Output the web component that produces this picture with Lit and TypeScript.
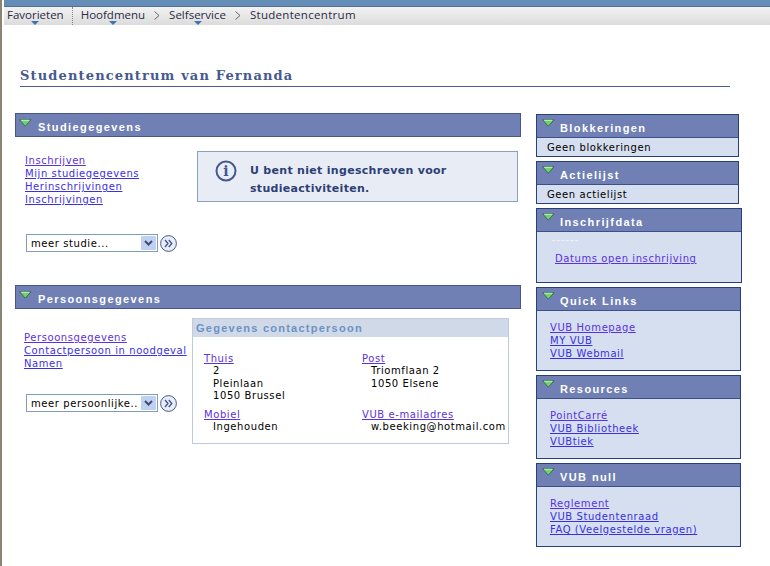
import { LitElement, html, css, svg } from "lit";
import { customElement } from "lit/decorators.js";

const tri = svg`<svg class="tri" width="13" height="8" viewBox="0 0 13 8"><path d="M0.6 0.8H12L6.3 7.2Z" fill="#6fd16f" stroke="#2f5f3a" stroke-width="0.8"/><path d="M2.2 1.3H10.4" stroke="#c6f5c0" stroke-width="1"/></svg>`;
const go = html`<svg class="go" width="17" height="17" viewBox="0 0 17 17"><circle cx="8.5" cy="8.5" r="7.9" fill="#e8edf7" stroke="#4a5a86" stroke-width="1"/><path d="M5 5L8 8.5L5 12M8.8 5L11.8 8.5L8.8 12" fill="none" stroke="#3c5290" stroke-width="1.3"/></svg>`;
const caret = html`<span class="caret"></span>`;
const chev = html`<svg class="chev" width="6" height="9" viewBox="0 0 6 9"><path d="M0.5 0.5L5 4.5L0.5 8.5" fill="none" stroke="#666" stroke-width="1"/></svg>`;

const select = (label: string) => html`<div class="selrow">
  <div class="select"><span class="sellabel">${label}</span><span class="selbtn"><svg width="11" height="8" viewBox="0 0 11 8"><path d="M2 2L5.5 5.5L9 2" fill="none" stroke="#3d4f70" stroke-width="2"/></svg></span></div>
  ${go}
</div>`;

const links = (items: string[]) => html`<div class="links">${items.map((t) => html`<a href="#">${t}</a>`)}</div>`;

@customElement("app-root")
export class AppRoot extends LitElement {
  static styles = css`
    :host { display: block; width: 770px; height: 566px; box-sizing: border-box; border-left: 2px solid #8a8474; overflow: hidden; background: #fff; font-family: "DejaVu Sans", Verdana, sans-serif; font-size: 10px; letter-spacing: 0.58px; color: #000; }
    a { color: #3a30e0; text-decoration: underline; }
    a.v { color: #5a30e0; }
    .topbar { height: 6px; margin-left: 2px; background: #648db8; border-bottom: 1px solid #54708f; }
    .menu { height: 18px; margin-left: 2px; background: linear-gradient(#f2f2f2, #dcdcdc); display: flex; align-items: flex-start; padding-left: 3px; font: 11.5px/16px "Open Sans", "Noto Sans", sans-serif; letter-spacing: 0; color: #2a2a44; }
    .mi { position: relative; display: block; height: 18px; }
    .caret { position: absolute; left: 50%; bottom: 0; margin-left: -4px; border: 4px solid transparent; border-top: 4px solid #3f74b4; border-bottom: 0; }
    .sep { margin: 0 8px 0 8px; height: 18px; border-left: 1px dotted #888; }
    .chev { margin: 4px 9px 0; flex: none; }
    .wide { letter-spacing: 0.3px; }
    .main { padding-left: 13px; }
    .left { width: 506px; }
    .title { margin: 41px 0 0 5px; width: 710px; height: 20px; border-bottom: 1px solid #4a5a98; font: bold 13px/19px "DejaVu Serif", Georgia, serif; letter-spacing: 1.15px; color: #45598f; }
    .cols { display: flex; align-items: flex-start; margin-top: 26px; }
    .right { margin-left: 15px; display: flex; flex-direction: column; gap: 4px; padding-top: 1px; }
    .sechead { box-sizing: border-box; height: 24px; background: #7080b4; border: 1px solid #47568c; color: #fff; font: bold 11px "Liberation Sans", Arial, sans-serif; letter-spacing: 1.4px; display: flex; align-items: center; padding-top: 3px; }
    .tri { flex: none; margin: -8px 0 0 3px; }
    .sechead span { margin-left: 6px; }
    .links { display: flex; flex-direction: column; align-items: flex-start; line-height: 13px; }
    .links a:first-child { color: #5a30e0; }
    .s1 { display: flex; height: 148px; }
    .s1col { width: 182px; padding: 17px 0 0 10px; box-sizing: border-box; }
    .selrow { display: flex; align-items: center; gap: 2px; margin-top: 28px; margin-left: 1px; }
    .select { box-sizing: border-box; width: 132px; height: 18px; background: #fff; border: 1px solid #7f9db9; display: flex; align-items: center; justify-content: space-between; font-size: 10px; }
    .sellabel { padding-left: 4px; white-space: nowrap; overflow: hidden; }
    .selbtn { width: 15px; height: 14px; margin-right: 1px; background: #bfd0f2; display: flex; align-items: center; justify-content: center; flex: none; border-radius: 1px; }
    .go { flex: none; }
    .info { box-sizing: border-box; width: 321px; height: 51px; margin: 14px 0 0 0; background: #e8edf5; border: 1px solid #8a9fc5; display: flex; color: #2d3f75; font-weight: bold; font-size: 11px; letter-spacing: 0.3px; line-height: 18px; }
    .info svg { flex: none; margin: 8px 0 0 17px; }
    .info div { margin: 10px 0 0 11px; }
    .s2 { display: flex; }
    .s2col { width: 177px; padding: 22px 0 0 9px; box-sizing: border-box; }
    .s2col .selrow { margin-top: 24px; margin-left: 2px; }
    .contact { box-sizing: border-box; width: 317px; height: 126px; margin-top: 9px; border: 1px solid #c0cadf; }
    .chead { height: 18px; background: #d0d9e8; color: #6c92c4; font: bold 11px/18px "Liberation Sans", Arial, sans-serif; letter-spacing: 1.25px; padding-left: 3px; }
    .grid { display: grid; grid-template-columns: 158px 1fr; padding: 16px 0 0 11px; row-gap: 6.5px; }
    .grid a { display: block; line-height: 12px; }
    .grid p { margin: 0 0 0 9px; white-space: nowrap; line-height: 12.6px; }
    .box { box-sizing: border-box; border: 1px solid #27407a; background: #d5dff0; }
    .w203 { width: 203px; } .w206 { width: 206px; } .w205 { width: 205px; }
    .boxhead { height: 23px; box-sizing: border-box; background: #7080b4; border-bottom: 1px solid #3d4f86; color: #fff; font: bold 11px "Liberation Sans", Arial, sans-serif; letter-spacing: 1.4px; display: flex; align-items: center; padding-top: 3px; }
    .boxhead span { margin-left: 5px; }
    .boxhead .tri { margin: -9px 0 0 5px; }
    .geen { height: 18px; line-height: 19px; padding-left: 10px; }
    .ins { height: 50px; padding: 21px 0 0 18px; box-sizing: border-box; position: relative; }
    .dash { position: absolute; left: 15px; top: 8px; width: 26px; border-top: 1px dashed #eef1f8; }
    .lbody { height: 59px; padding: 10px 0 0 13px; box-sizing: border-box; }
  `;

  private box(title: string, cls: string, body: unknown) {
    return html`<div class="box ${cls}"><div class="boxhead">${tri}<span>${title}</span></div>${body}</div>`;
  }

  render() {
    return html`
      <div class="topbar"></div>
      <nav class="menu">
        <span class="mi">Favorieten${caret}</span><span class="sep"></span>
        <span class="mi">Hoofdmenu${caret}</span>${chev}
        <span class="mi">Selfservice${caret}</span>${chev}
        <span class="wide">Studentencentrum</span>
      </nav>
      <div class="main">
        <div class="title">Studentencentrum van Fernanda</div>
        <div class="cols">
          <div class="left">
            <div class="sechead">${tri}<span>Studiegegevens</span></div>
            <div class="s1">
              <div class="s1col">
                ${links(["Inschrijven", "Mijn studiegegevens", "Herinschrijvingen", "Inschrijvingen"])}
                ${select("meer studie...")}
              </div>
              <div class="info">
                <svg width="24" height="24" viewBox="0 0 24 24"><circle cx="11" cy="11" r="9.5" fill="none" stroke="#44578f" stroke-width="2"/><text x="11" y="16" text-anchor="middle" font-family="DejaVu Serif" font-weight="bold" font-size="14" fill="#44578f">i</text></svg>
                <div>U bent niet ingeschreven voor<br />studieactiviteiten.</div>
              </div>
            </div>
            <div class="sechead">${tri}<span>Persoonsgegevens</span></div>
            <div class="s2">
              <div class="s2col">
                ${links(["Persoonsgegevens", "Contactpersoon in noodgeval", "Namen"])}
                ${select("meer persoonlijke..")}
              </div>
              <div class="contact">
                <div class="chead">Gegevens contactpersoon</div>
                <div class="grid">
                  <div><a class="v" href="#">Thuis</a><p>2</p><p>Pleinlaan</p><p>1050 Brussel</p></div>
                  <div><a class="v" href="#">Post</a><p>Triomflaan 2</p><p>1050 Elsene</p></div>
                  <div><a class="v" href="#">Mobiel</a><p>Ingehouden</p></div>
                  <div><a class="v" href="#">VUB e-mailadres</a><p>w.beeking@hotmail.com</p></div>
                </div>
              </div>
            </div>
          </div>
          <div class="right">
            ${this.box("Blokkeringen", "w203", html`<div class="geen">Geen blokkeringen</div>`)}
            ${this.box("Actielijst", "w203", html`<div class="geen">Geen actielijst</div>`)}
            ${this.box("Inschrijfdata", "w206", html`<div class="ins"><span class="dash"></span><a class="v" href="#">Datums open inschrijving</a></div>`)}
            ${this.box("Quick Links", "w205", html`<div class="lbody">${links(["VUB Homepage", "MY VUB", "VUB Webmail"])}</div>`)}
            ${this.box("Resources", "w205", html`<div class="lbody">${links(["PointCarré", "VUB Bibliotheek", "VUBtiek"])}</div>`)}
            ${this.box("VUB null", "w205", html`<div class="lbody">${links(["Reglement", "VUB Studentenraad", "FAQ (Veelgestelde vragen)"])}</div>`)}
          </div>
        </div>
      </div>
    `;
  }
}
